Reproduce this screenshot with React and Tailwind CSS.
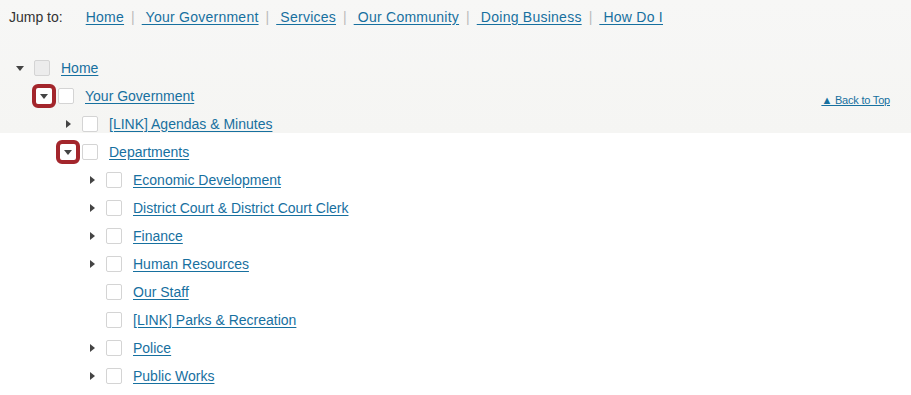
import { Fragment } from 'react'

const jump = ['Home', ' Your Government', ' Services', ' Our Community', ' Doing Business', ' How Do I']

const tree = [
  { label: 'Home', level: 0, caret: 'down', filled: true },
  { label: 'Your Government', level: 1, caret: 'down', focus: true },
  { label: '[LINK] Agendas & Minutes', level: 2, caret: 'right' },
  { label: 'Departments', level: 2, caret: 'down', focus: true },
  { label: 'Economic Development', level: 3, caret: 'right' },
  { label: 'District Court & District Court Clerk', level: 3, caret: 'right' },
  { label: 'Finance', level: 3, caret: 'right' },
  { label: 'Human Resources', level: 3, caret: 'right' },
  { label: 'Our Staff', level: 3 },
  { label: '[LINK] Parks & Recreation', level: 3 },
  { label: 'Police', level: 3, caret: 'right' },
  { label: 'Public Works', level: 3, caret: 'right' },
]

const indent = ['pl-[8px]', 'pl-[32px]', 'pl-[56px]', 'pl-[80px]']

function Caret({ dir }) {
  if (dir === 'down')
    return (
      <svg width="8" height="5" viewBox="0 0 8 5">
        <path d="M0 0h8L4 5z" fill="#444" />
      </svg>
    )
  return (
    <svg width="5" height="8" viewBox="0 0 5 8">
      <path d="M0 0l5 4-5 4z" fill="#444" />
    </svg>
  )
}

function Row({ label, level, caret, focus, filled }) {
  return (
    <div className={`h-[28px] flex items-center ${indent[level]}`}>
      <div
        className={`w-[24px] h-[24px] shrink-0 flex items-center justify-center ${
          focus ? 'border-[4px] border-[#a3262c] rounded-[6px] bg-white' : ''
        }`}
      >
        {caret && <Caret dir={caret} />}
      </div>
      <span
        className={`ml-[2px] w-[16px] h-[16px] shrink-0 rounded-[2px] border border-[#d4d4d4] ${
          filled ? 'bg-[#ececec]' : 'bg-white'
        }`}
      />
      <a href="#" className="ml-[11px] text-[#17709f] underline underline-offset-2 whitespace-nowrap">
        {label}
      </a>
    </div>
  )
}

export default function App() {
  return (
    <div
      className="w-[911px] h-[395px] text-[14px] overflow-hidden bg-[linear-gradient(to_bottom,#f7f7f6_0px,#f5f5f3_133px,#ffffff_133px)]"
      style={{ fontFamily: '"Liberation Sans", Arial, sans-serif' }}
    >
      <div className="flex items-center pl-[9px] pt-[8px] h-[26px] whitespace-pre">
        <span className="text-[#333] mr-[23px]">Jump to:</span>
        {jump.map((j, i) => (
          <Fragment key={j}>
            {i > 0 && <span className="text-[#bbb] mx-[7px]">|</span>}
            <a href="#" className="text-[#17709f] underline underline-offset-2 tracking-[0.25px]">
              {j}
            </a>
          </Fragment>
        ))}
      </div>
      <div className="flex pt-[28px]">
        <div className="flex-1">
          {tree.map((r) => (
            <Row key={r.label} {...r} />
          ))}
        </div>
        <div className="pt-[35px] pr-[21px]">
          <a href="#" className="text-[11px] text-[#17709f] underline tracking-[-0.2px]">
            ▲ Back to Top
          </a>
        </div>
      </div>
    </div>
  )
}
